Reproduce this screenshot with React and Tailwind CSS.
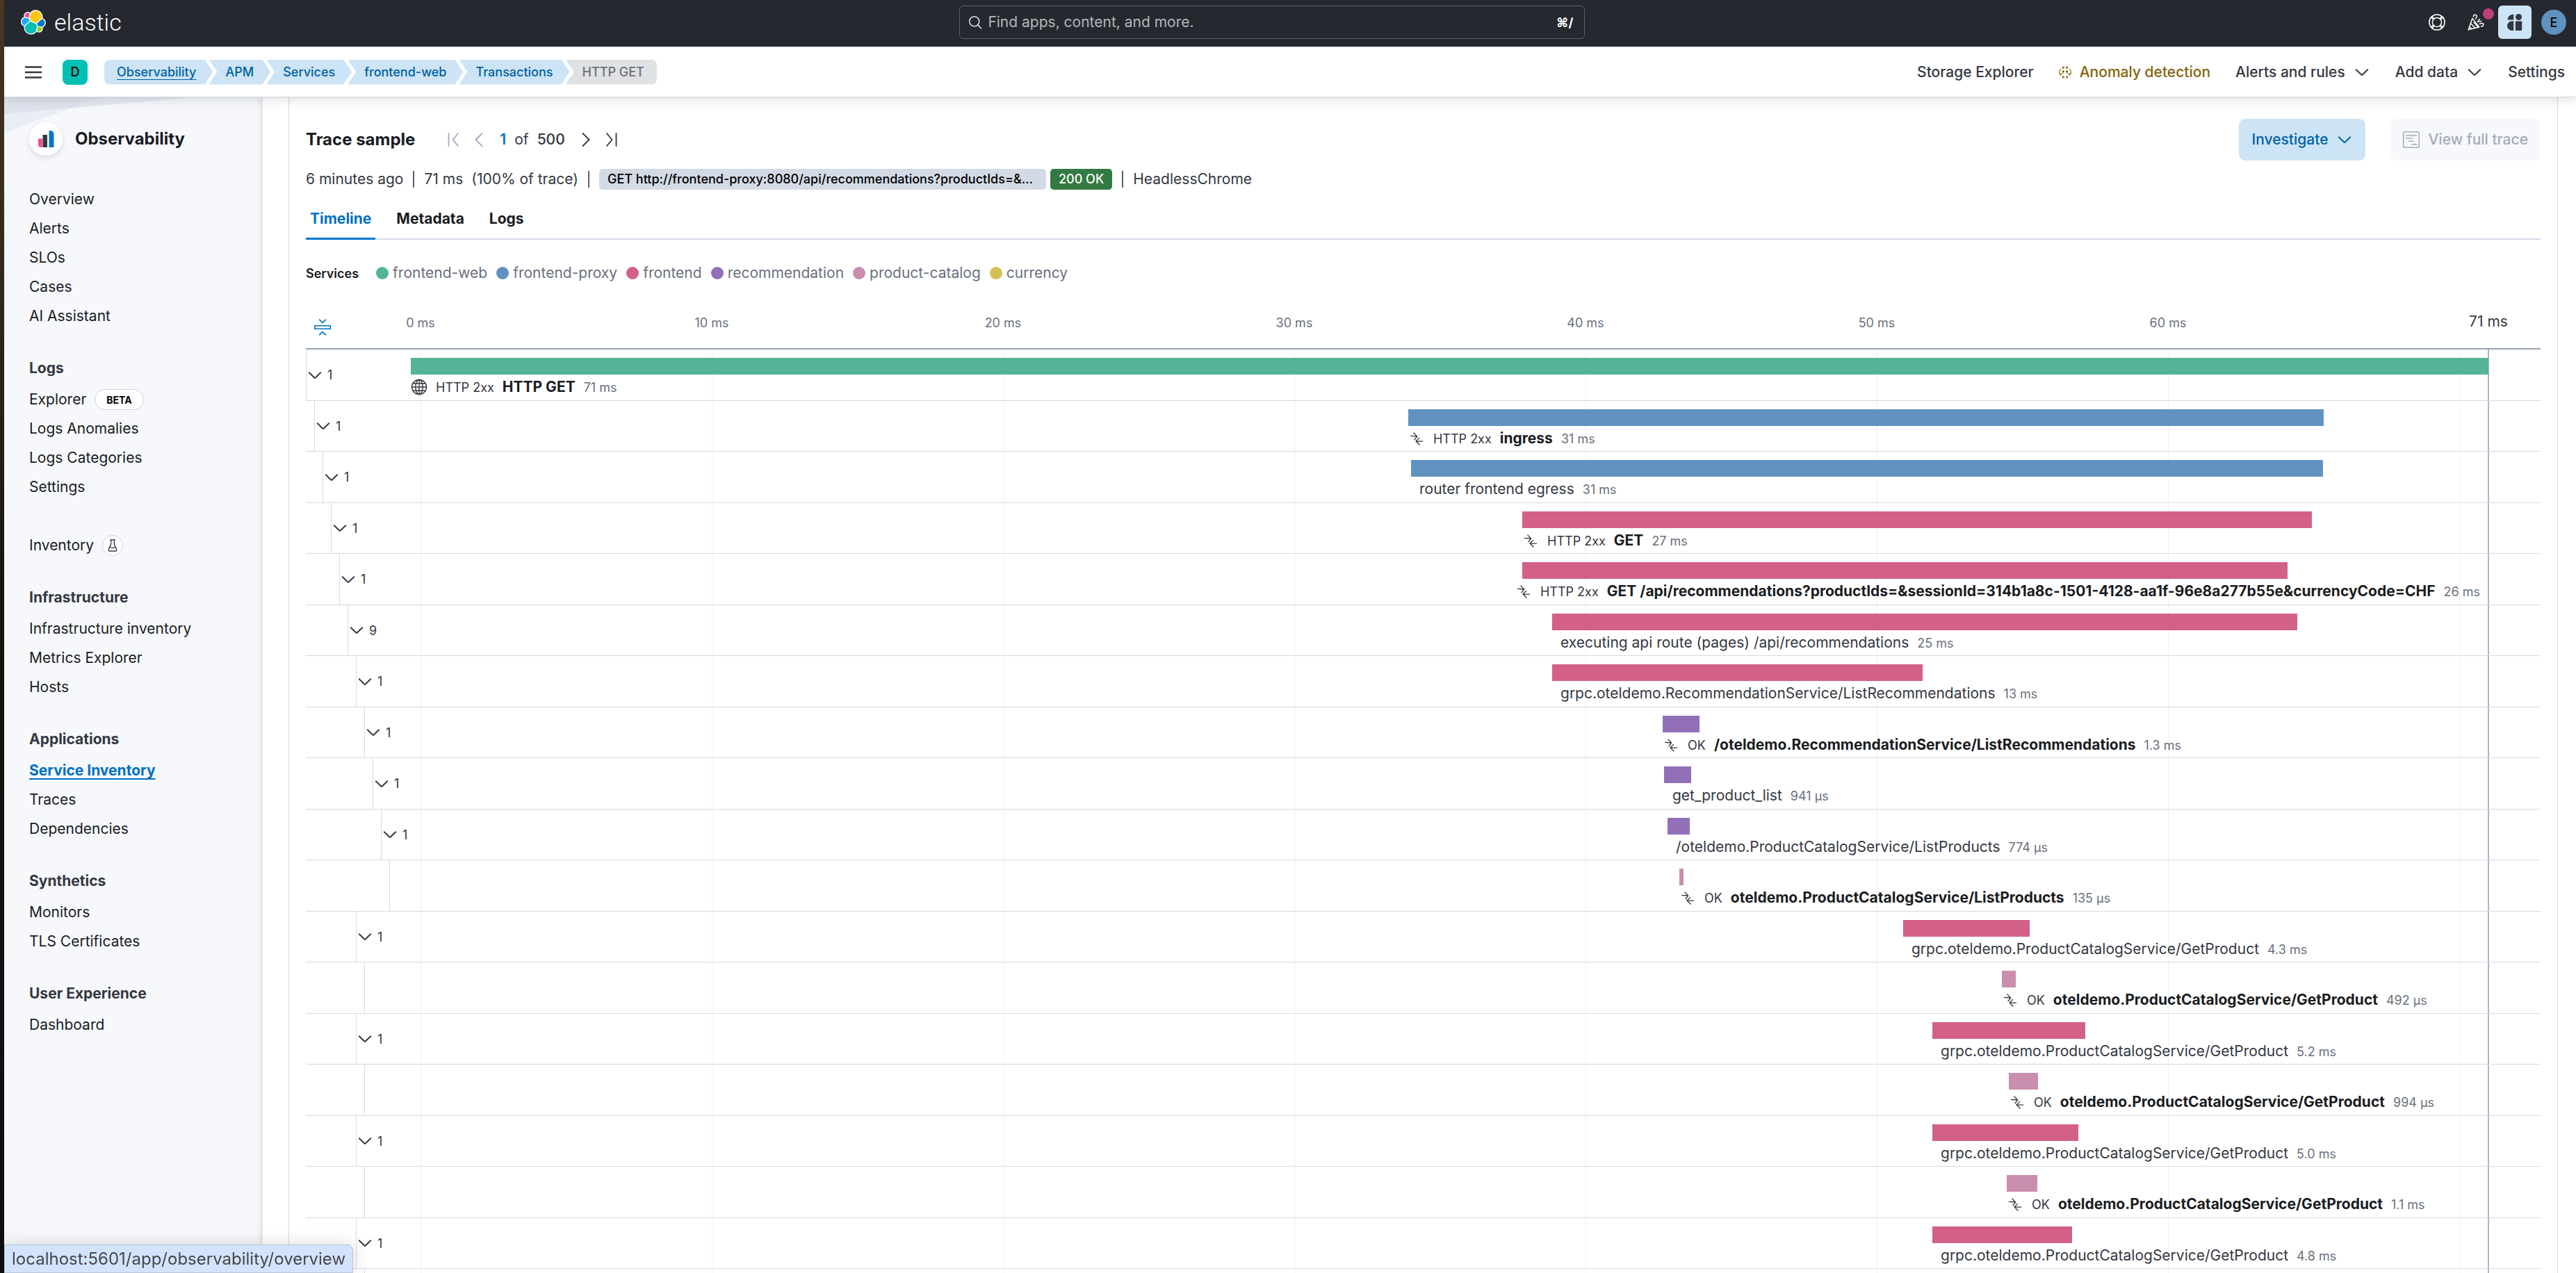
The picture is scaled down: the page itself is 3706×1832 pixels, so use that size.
import { useState } from 'react'
import clsx from 'clsx'

const TOTAL = 71337
const TICKS = [0, 10, 20, 30, 40, 50, 60, 70]

const serviceColor = {
  'frontend-web': 'bg-[#54b399]',
  'frontend-proxy': 'bg-[#6092c0]',
  frontend: 'bg-[#d36086]',
  recommendation: 'bg-[#9170b8]',
  'product-catalog': 'bg-[#ca8eae]',
  currency: 'bg-[#d6bf57]'
}

// start and duration are in microseconds
const spans = [
  { depth: 0, children: 1, service: 'frontend-web', start: 0, duration: 71337, icon: 'globe', status: 'HTTP 2xx', name: 'HTTP GET', label: '71 ms' },
  { depth: 1, children: 1, service: 'frontend-proxy', start: 34248, duration: 31432, icon: 'merge', status: 'HTTP 2xx', name: 'ingress', label: '31 ms' },
  { depth: 2, children: 1, service: 'frontend-proxy', start: 34344, duration: 31313, name: 'router frontend egress', label: '31 ms' },
  { depth: 3, children: 1, service: 'frontend', start: 38163, duration: 27112, icon: 'merge', status: 'HTTP 2xx', name: 'GET', label: '27 ms' },
  { depth: 4, children: 1, service: 'frontend', start: 38163, duration: 26277, icon: 'merge', status: 'HTTP 2xx', name: 'GET /api/recommendations?productIds=&sessionId=314b1a8c-1501-4128-aa1f-96e8a277b55e&currencyCode=CHF', label: '26 ms' },
  { depth: 5, children: 9, service: 'frontend', start: 39189, duration: 25585, name: 'executing api route (pages) /api/recommendations', label: '25 ms' },
  { depth: 6, children: 1, service: 'frontend', start: 39189, duration: 12721, name: 'grpc.oteldemo.RecommendationService/ListRecommendations', label: '13 ms' },
  { depth: 7, children: 1, service: 'recommendation', start: 42984, duration: 1265, icon: 'merge', status: 'OK', name: '/oteldemo.RecommendationService/ListRecommendations', label: '1.3 ms' },
  { depth: 8, children: 1, service: 'recommendation', start: 43031, duration: 931, name: 'get_product_list', label: '941 μs' },
  { depth: 9, children: 1, service: 'recommendation', start: 43151, duration: 764, name: '/oteldemo.ProductCatalogService/ListProducts', label: '774 μs' },
  { depth: 10, children: 0, service: 'product-catalog', start: 43556, duration: 143, icon: 'merge', status: 'OK', name: 'oteldemo.ProductCatalogService/ListProducts', label: '135 μs' },
  { depth: 6, children: 1, service: 'frontend', start: 51241, duration: 4344, name: 'grpc.oteldemo.ProductCatalogService/GetProduct', label: '4.3 ms' },
  { depth: 7, children: 0, service: 'product-catalog', start: 54630, duration: 477, icon: 'merge', status: 'OK', name: 'oteldemo.ProductCatalogService/GetProduct', label: '492 μs' },
  { depth: 6, children: 1, service: 'frontend', start: 52244, duration: 5251, name: 'grpc.oteldemo.ProductCatalogService/GetProduct', label: '5.2 ms' },
  { depth: 7, children: 0, service: 'product-catalog', start: 54869, duration: 1002, icon: 'merge', status: 'OK', name: 'oteldemo.ProductCatalogService/GetProduct', label: '994 μs' },
  { depth: 6, children: 1, service: 'frontend', start: 52244, duration: 5012, name: 'grpc.oteldemo.ProductCatalogService/GetProduct', label: '5.0 ms' },
  { depth: 7, children: 0, service: 'product-catalog', start: 54798, duration: 1050, icon: 'merge', status: 'OK', name: 'oteldemo.ProductCatalogService/GetProduct', label: '1.1 ms' },
  { depth: 6, children: 1, service: 'frontend', start: 52244, duration: 4797, name: 'grpc.oteldemo.ProductCatalogService/GetProduct', label: '4.8 ms' },
  { depth: 7, children: 0, service: 'product-catalog', start: 54798, duration: 1002 }
]

const navSections = [
  { items: ['Overview', 'Alerts', 'SLOs', 'Cases', 'AI Assistant'] },
  { title: 'Logs', items: ['Explorer', 'Logs Anomalies', 'Logs Categories', 'Settings'] },
  { items: ['Inventory'] },
  { title: 'Infrastructure', items: ['Infrastructure inventory', 'Metrics Explorer', 'Hosts'] },
  { title: 'Applications', items: ['Service Inventory', 'Traces', 'Dependencies'] },
  { title: 'Synthetics', items: ['Monitors', 'TLS Certificates'] },
  { title: 'User Experience', items: ['Dashboard'] }
]

const breadcrumbs = ['Observability', 'APM', 'Services', 'frontend-web', 'Transactions', 'HTTP GET']

const percent = (value) => `${(value / TOTAL) * 100}%`

const Icon = ({ className, strokeWidth, children }) => (
  <svg
    className={clsx('shrink-0', className || 'size-6')}
    viewBox="0 0 16 16"
    fill="none"
    stroke="currentColor"
    strokeWidth={strokeWidth || 1}
    strokeLinecap="round"
    strokeLinejoin="round"
    aria-hidden="true"
  >
    {children}
  </svg>
)

const ChevronDown = ({ className }) => (
  <Icon className={className} strokeWidth="1.3">
    <path d="M2.500 5.500 7.300 10.200a1 1 0 0 0 1.400 0L13.500 5.500" />
  </Icon>
)

const GlobeIcon = () => (
  <Icon strokeWidth="0.9">
    <circle cx="8" cy="8" r="7" />
    <ellipse cx="8" cy="8" rx="3.5" ry="7" />
    <path d="M8 1v14M1 8h14M2.200 4.500h11.600M2.200 11.500h11.600" />
  </Icon>
)

const MergeIcon = () => (
  <Icon strokeWidth="0.9">
    <path d="M2.3 5.6 8.4 6M5.2 2.6 8.4 6 6 9.2M13.7 10.7H7.4M10.4 7.6l-3 3.1 3.3 3.3" />
  </Icon>
)

const ElasticLogo = () => {
  const parts = [
    ['#fec514', 'M12.58 13.787l7.002 3.211 7.066-6.213a7.849 7.849 0 0 0 .152-1.557c0-4.287-3.464-7.774-7.723-7.774a7.694 7.694 0 0 0-6.363 3.375L11.536 10.9l1.044 2.887z'],
    ['#00bfb3', 'M5.333 21.215c-.1.507-.152 1.031-.152 1.573 0 4.301 3.48 7.801 7.76 7.801 2.585 0 4.995-1.285 6.443-3.436l1.167-6.108-1.558-2.994-7.03-3.218-6.63 6.382z'],
    ['#f04e98', 'M5.288 9.067l4.8 1.137L11.14 4.73a3.785 3.785 0 0 0-5.852 4.337z'],
    ['#1ba9f5', 'M4.872 10.214c-2.138.712-3.632 2.764-3.632 5.03 0 2.206 1.359 4.177 3.4 4.958l6.733-6.118-1.236-2.655-5.265-1.215z'],
    ['#93c90e', 'M20.873 27.147a3.75 3.75 0 0 0 2.297.786 3.783 3.783 0 0 0 3.564-5.09l-4.69-1.104-1.17 5.408z'],
    ['#0077cc', 'M21.848 20.563l5.17 1.211c2.13-.71 3.625-2.766 3.625-5.032 0-2.206-1.363-4.174-3.407-4.952l-6.763 5.946 1.375 2.827z']
  ]
  return (
    <svg className="size-9" viewBox="0 0 32 32" aria-hidden="true">
      {parts.map(([color, d]) => (
        <path key={`${color}-edge`} d={d} fill="#fff" stroke="#fff" strokeWidth="2.4" />
      ))}
      {parts.map(([color, d]) => (
        <path key={color} d={d} fill={color} />
      ))}
    </svg>
  )
}

const TopBar = () => (
  <div className="flex h-[68px] items-start justify-between border-b border-[#d3dae6] bg-[#25282f] pr-2 pl-6">
    <a href="#home" className="flex h-16 items-center gap-3 pr-1 text-white">
      <ElasticLogo />
      <span className="font-[Roboto,sans-serif] text-[34px] leading-9 font-light">elastic</span>
    </a>
    <label className="mt-2 flex h-12 w-[900px] items-center gap-2 rounded-md border border-[#5d6067] px-3 text-white">
      <Icon className="size-5">
        <circle cx="7" cy="7" r="5.6" />
        <path d="m11.2 11.2 3.6 3.8" />
      </Icon>
      <input
        type="search"
        placeholder="Find apps, content, and more."
        className="min-w-0 flex-1 bg-transparent text-[21px] outline-none placeholder:text-[#b4b6ba]"
      />
      <span className="pr-1 text-[18px] font-bold">⌘/</span>
    </label>
    <div className="flex gap-2 pt-2 text-white">
      <button type="button" aria-label="Help" className="flex size-12 items-center justify-center">
        <Icon>
          <circle cx="8" cy="8" r="7.4" />
          <circle cx="8" cy="8" r="4.4" />
          <path d="m2.6 3.6 2.2 1.6M3.6 2.6l1.6 2.2M13.4 3.6l-2.2 1.6M12.4 2.6l-1.6 2.2M2.6 12.4l2.2-1.6M3.6 13.4l1.6-2.2M13.4 12.4l-2.2-1.6M12.4 13.4l-1.6-2.2" />
        </Icon>
      </button>
      <button type="button" aria-label="What's new" className="relative flex size-12 items-center justify-center">
        <Icon>
          <path d="M.8 15.2 4.6 4.4l6.6 8.2L.8 15.2ZM3.2 9.2l4.2 4.4M6 8l3.8 4.4M2.2 12.6l1.6 1.8M5.6 2.8c0-1.6 1-2.2 2-2 1.2.2 1.6 1.4.8 2.8L7.6 5M9.6 7.4l2-2.4M10 7.6l3-.6M11.6 9.6c2-1.2 3.8-.6 3.6.8-.2 1.4-1.6 2-2.2 1.4" />
        </Icon>
        <span className="absolute top-1 -right-0.5 size-4 rounded-full bg-[#bd3e78]" />
      </button>
      <button type="button" aria-label="Solutions" className="flex size-12 items-center justify-center rounded-md bg-[#cce4f5] text-[#343741]">
        <Icon>
          <g stroke="none" fill="currentColor">
            <path d="M6.8.4v5.2H1C1.200 2.700 3.600.500 6.800.4ZM6.800 7v9H5.200a4.500 4.500 0 0 1 0-9h1.600ZM8.600 7h6.200v9H8.600z" />
            <circle cx="11.700" cy="3" r="3" />
          </g>
        </Icon>
      </button>
      <button type="button" className="flex size-12 items-center justify-center">
        <span className="flex size-9 items-center justify-center rounded-full bg-[#6092c0] text-[18px] font-medium text-black">E</span>
      </button>
    </div>
  </div>
)

const Breadcrumbs = () => (
  <nav className="flex h-9 text-[18px] leading-9 font-medium">
    {breadcrumbs.map((crumb, i) => {
      const first = i === 0
      const last = i === breadcrumbs.length - 1
      return (
        <a
          key={crumb}
          href="#breadcrumb"
          className={clsx(
            first && 'rounded-l-lg pr-6 pl-[18px] underline underline-offset-4 [clip-path:polygon(0_0,calc(100%-12px)_0,100%_50%,calc(100%-12px)_100%,0_100%)]',
            !first && !last && '-ml-1.5 px-6 [clip-path:polygon(0_0,calc(100%-12px)_0,100%_50%,calc(100%-12px)_100%,0_100%,12px_50%)]',
            last
              ? '-ml-1.5 rounded-r-lg bg-[#e0e1e3] pr-[18px] pl-6 text-[#69707d] [clip-path:polygon(0_0,100%_0,100%_100%,0_100%,12px_50%)]'
              : 'bg-[#cce4f5] text-[#0061a6]'
          )}
        >
          {crumb}
        </a>
      )
    })}
  </nav>
)

const MenuBar = () => (
  <div className="relative z-10 flex h-[72px] items-center justify-between border-b border-[#d3dae6] bg-white pr-4 pl-[30px] shadow-[0_3px_16px_rgba(0,0,0,0.14)]">
    <div className="flex items-center">
      <button type="button" aria-label="Menu">
        <Icon strokeWidth="1.8">
          <path strokeLinecap="butt" d="M0 3h16M0 8h16M0 13h16" />
        </Icon>
      </button>
      <button type="button" className="mr-6 ml-[30px] flex size-9 items-center justify-center rounded-lg bg-[#00bfb3] text-[18px] font-medium text-black">
        D
      </button>
      <Breadcrumbs />
    </div>
    <div className="flex items-center gap-9 text-[21px] font-medium text-[#343741]">
      <a href="#storage">Storage Explorer</a>
      <a href="#anomaly" className="flex items-center gap-3 text-[#83650a]">
        <Icon className="size-[18px]">
          <path d="M2.6 4C.8 5.2.5 6.400.7 8c-.3 1.800.5 3.200 2 4M13.400 4c1.800 1.200 2.100 2.400 1.900 4 .3 1.800-.5 3.200-2 4" />
          <path d="M2 10.400l3-1.200M14 10.400l-3-1.200" />
          <circle cx="5.600" cy="2" r="1" />
          <circle cx="10.400" cy="2" r="1" />
          <circle cx="5.600" cy="7" r="1" fill="currentColor" />
          <circle cx="10.400" cy="7" r="1" fill="currentColor" />
          <circle cx="5.600" cy="14.200" r="1" />
          <circle cx="10.400" cy="14.200" r="1" />
        </Icon>
        Anomaly detection
      </a>
      <button type="button" className="flex items-center gap-3">
        Alerts and rules
        <ChevronDown />
      </button>
      <button type="button" className="flex items-center gap-3">
        Add data
        <ChevronDown />
      </button>
      <a href="#settings">Settings</a>
    </div>
  </div>
)

const Sidebar = () => (
  <aside className="relative w-[372px] shrink-0 bg-[#f6f8fc] pt-9 pl-9 shadow-[inset_-12px_0_12px_-12px_rgba(0,0,0,0.16)]">
    <svg className="absolute top-0 left-0" width="272" height="52" aria-hidden="true">
      <path d="M0 0h139L0 51z" fill="#e9edf6" />
      <path d="M0 0h272L0 24z" fill="#d3dae6" fillOpacity=".5" />
    </svg>
    <div className="relative flex items-center gap-[18px]">
      <span className="flex size-12 items-center justify-center rounded-full bg-white shadow-[0_3px_9px_rgba(0,0,0,0.12)]">
        <svg className="size-6" viewBox="0 0 24 24" aria-hidden="true">
          <path fill="#f04e98" d="M1 11.500h6v12.500H5a4 4 0 0 1-4-4z" />
          <path fill="#343741" d="M7.500 6h6.500v18H7.500z" />
          <path fill="#0077cc" d="M16.500 0h2a5 5 0 0 1 5 5v19h-7z" />
        </svg>
      </span>
      <h2 className="text-[24px] leading-9 font-bold text-[#1a1c21]">Observability</h2>
    </div>
    <nav>
      {navSections.map((section, i) => (
        <section key={i} className={section.title ? 'pt-[39px]' : 'pt-[42px]'}>
          {section.title && (
            <h3 className="mb-[9px] text-[21px] leading-[30px] font-bold text-[#343741]">{section.title}</h3>
          )}
          <ul>
            {section.items.map((item) => (
              <li key={item} className="flex h-[42px] items-center gap-3 text-[21px]">
                <a
                  href="#nav"
                  className={
                    item === 'Service Inventory'
                      ? 'font-bold text-[#0071c2] underline underline-offset-4'
                      : 'text-[#1a1c21]'
                  }
                >
                  {item}
                </a>
                {item === 'Explorer' && (
                  <span className="flex h-[30px] items-center rounded-full border border-[#cbd3e2] bg-white px-4 text-[14px] font-bold text-black">
                    BETA
                  </span>
                )}
                {item === 'Inventory' && (
                  <span className="flex size-[30px] items-center justify-center rounded-full border border-[#cbd3e2] bg-white text-[#1a1c21]">
                    <Icon className="size-[18px]">
                      <path d="M5 .8h6M6 .8v5.400L2.800 13.400c-.3 1 .1 1.800 1 1.800h8.400c.9 0 1.300-.8 1-1.800L10 6.200V.8M4.400 10.600c1.600-.8 2.600.8 4 .4 1.200-.3 2-.8 3.200-.4" />
                    </Icon>
                  </span>
                )}
              </li>
            ))}
          </ul>
        </section>
      ))}
    </nav>
  </aside>
)

const PageButton = ({ label, disabled, children }) => (
  <button
    type="button"
    aria-label={label}
    disabled={disabled}
    className={clsx('flex size-9 items-center justify-center', disabled ? 'text-[#a2abba]' : 'text-[#343741]')}
  >
    <Icon strokeWidth="1.2">{children}</Icon>
  </button>
)

const TraceHeader = () => {
  const [tab, setTab] = useState('Timeline')

  return (
    <>
      <div className="flex h-[60px] items-center">
        <h2 className="text-[24px] font-bold text-[#1a1c21]">Trace sample</h2>
        <div className="ml-[38px] flex items-center text-[21px]">
          <PageButton label="First page" disabled>
            <path d="M3 2v12M12 2 7 8l5 6" />
          </PageButton>
          <PageButton label="Previous page" disabled>
            <path d="m11 2-6 6 6 6" />
          </PageButton>
          <div className="flex gap-3 px-3">
            <span className="font-semibold text-[#0071c2]">1</span>
            <span>of</span>
            <span className="font-medium">500</span>
          </div>
          <PageButton label="Next page">
            <path d="m5 2 6 6-6 6" />
          </PageButton>
          <PageButton label="Last page">
            <path d="M13 2v12M4 2l5 6-5 6" />
          </PageButton>
        </div>
        <div className="ml-auto flex gap-9 text-[21px] font-medium">
          <button type="button" className="flex h-[60px] items-center gap-3 rounded-[9px] bg-[#cce4f5] px-[18px] text-[#0061a6]">
            Investigate
            <ChevronDown />
          </button>
          <button type="button" disabled className="flex h-[60px] items-center gap-3 rounded-[9px] bg-[#f7f8fb] px-[18px] text-[#a2abba]">
            <Icon>
              <rect x=".5" y=".5" width="15" height="15" rx="1.200" />
              <path d="M3 4h10M3 6.700h6M5.500 9.500h4.500M8.500 12.500h5" />
            </Icon>
            View full trace
          </button>
        </div>
      </div>

      <div className="mt-3 flex h-[30px] items-center text-[21px]">
        <span>6 minutes ago</span>
        <span className="mx-3.5 h-6 w-0.5 bg-[#5c5f68]" />
        <span>71 ms</span>
        <span className="ml-3">(100% of trace)</span>
        <span className="mx-3.5 h-6 w-0.5 bg-[#5c5f68]" />
        <span className="w-[643px] truncate rounded-[5px] bg-[#d3dae6] px-3 text-[18px] leading-[30px] font-medium text-black">
          GET http://frontend-proxy:8080/api/recommendations?productIds=&…
        </span>
        <span className="ml-1.5 rounded-[5px] bg-[#327a42] px-3 text-[18px] leading-[30px] font-medium text-white">200 OK</span>
        <span className="mx-3.5 h-6 w-0.5 bg-[#5c5f68]" />
        <span>HeadlessChrome</span>
      </div>

      <div role="tablist" className="mt-3 flex h-[60px] gap-6 border-b-2 border-[#d3dae6] text-[21px] font-bold">
        {['Timeline', 'Metadata', 'Logs'].map((name) => (
          <button
            key={name}
            type="button"
            role="tab"
            aria-selected={tab === name}
            onClick={() => setTab(name)}
            className={clsx(
              '-mb-0.5 border-b-[3px] px-1.5 pt-0.5',
              tab === name ? 'border-[#0077cc] text-[#0071c2]' : 'border-transparent text-[#1a1c21]'
            )}
          >
            {name}
          </button>
        ))}
      </div>

      <div className="mt-9 flex h-6 items-center gap-[13px] text-[21px] text-[#69707d]">
        <span className="mr-3 text-[18px] font-semibold text-[#1a1c21]">Services</span>
        {Object.keys(serviceColor).map((service) => (
          <span key={service} className="flex items-center gap-1.5">
            <span className={clsx('size-[18px] rounded-full', serviceColor[service])} />
            {service}
          </span>
        ))}
      </div>
    </>
  )
}

const SpanRow = ({ span }) => (
  <li className="flex border-b border-[#d3dae6] odd:h-[74px] even:h-[73px]">
    <div className="flex w-[151px] shrink-0">
      <div className="shrink-0" style={{ width: span.depth * 12 }} />
      <div className="flex items-center border-l border-[#d3dae6]">
        {span.children > 0 && (
          <button type="button" className="flex items-center gap-1.5 text-[18px] text-[#343741]">
            <ChevronDown />
            {span.children}
          </button>
        )}
      </div>
    </div>
    <div className="mr-[75px] min-w-0 flex-1 pt-3">
      <div
        className={clsx('h-6', serviceColor[span.service])}
        style={{ marginLeft: percent(span.start), width: percent(span.duration) }}
      />
      {/* the spacer shrinks so that long labels stay inside the track */}
      <div className="flex h-9 items-center">
        <div className="min-w-0" style={{ width: percent(span.start) }} />
        <div className="flex shrink-0 items-center gap-3 pr-3 whitespace-nowrap">
          {span.icon === 'globe' && <GlobeIcon />}
          {span.icon === 'merge' && <MergeIcon />}
          {span.status && <span className="text-[18px]">{span.status}</span>}
          {span.name && (
            <span className={clsx('text-[21px]', span.status ? 'font-bold text-[#1a1c21]' : 'ml-3')}>{span.name}</span>
          )}
          {span.label && <span className="text-[18px] text-[#69707d]">{span.label}</span>}
        </div>
      </div>
    </div>
  </li>
)

const Waterfall = () => (
  <div className="relative">
    <div className="flex h-[98px] border-b-2 border-[#98a2b3]">
      <div className="w-[151px] shrink-0 pt-[54px] pl-3">
        <button type="button" aria-label="Collapse all" className="block text-[#0071c2]">
          <Icon strokeWidth="1.1">
            <path d="M.5 6.500h15v3H.5zM5 .8l3 2.800 3-2.800M5 15.200l3-2.800 3 2.800" />
          </Icon>
        </button>
      </div>
      <div className="relative mr-[75px] flex-1 text-[18px] text-[#69707d]">
        {TICKS.slice(0, 7).map((tick) => (
          <span
            key={tick}
            className="absolute top-12 ml-3.5 -translate-x-1/2 leading-6"
            style={{ left: percent(tick * 1000) }}
          >
            {tick} ms
          </span>
        ))}
        <span className="absolute top-[46px] left-full -translate-x-1/2 text-[21px] leading-6 whitespace-nowrap text-[#343741]">
          71 ms
        </span>
      </div>
    </div>
    <div className="relative">
      <div className="pointer-events-none absolute inset-y-0 right-[75px] left-[151px]">
        {TICKS.map((tick) => (
          <span
            key={tick}
            className="absolute inset-y-0 ml-3.5 w-px bg-[#eef1f6]"
            style={{ left: percent(tick * 1000) }}
          />
        ))}
        <span className="absolute inset-y-0 left-full -ml-px w-0.5 bg-[#abb4c4]" />
      </div>
      <ul className="relative">
        {spans.map((span, i) => (
          <SpanRow key={i} span={span} />
        ))}
      </ul>
    </div>
  </div>
)

const App = () => (
  <div className="flex h-screen overflow-hidden bg-white font-[Inter,'Noto_Sans',sans-serif] text-[#343741]">
    <div className="w-1.5 shrink-0 bg-gradient-to-b from-[#4a3820] via-[#151410] to-[#0d0f10]" />
    <div className="flex min-w-0 flex-1 flex-col">
      <header>
        <TopBar />
        <MenuBar />
      </header>
      <div className="flex min-h-0 flex-1">
        <Sidebar />
        <main className="min-w-0 flex-1 overflow-hidden pr-[26px] pl-[37px]">
          <div className="border-x border-[#d3dae6] px-6 pt-[31px]">
            <TraceHeader />
            <Waterfall />
          </div>
        </main>
      </div>
    </div>
    <div className="fixed bottom-0 left-1.5 z-20 flex h-[41px] items-center rounded-tr-lg border border-[#b9c3d6] bg-[#d3e3fd] px-2.5 text-[24px] text-[#474747] shadow-[0_0_24px_rgba(0,0,0,0.15)]">
      localhost:5601/app/observability/overview
    </div>
  </div>
)

export default App
